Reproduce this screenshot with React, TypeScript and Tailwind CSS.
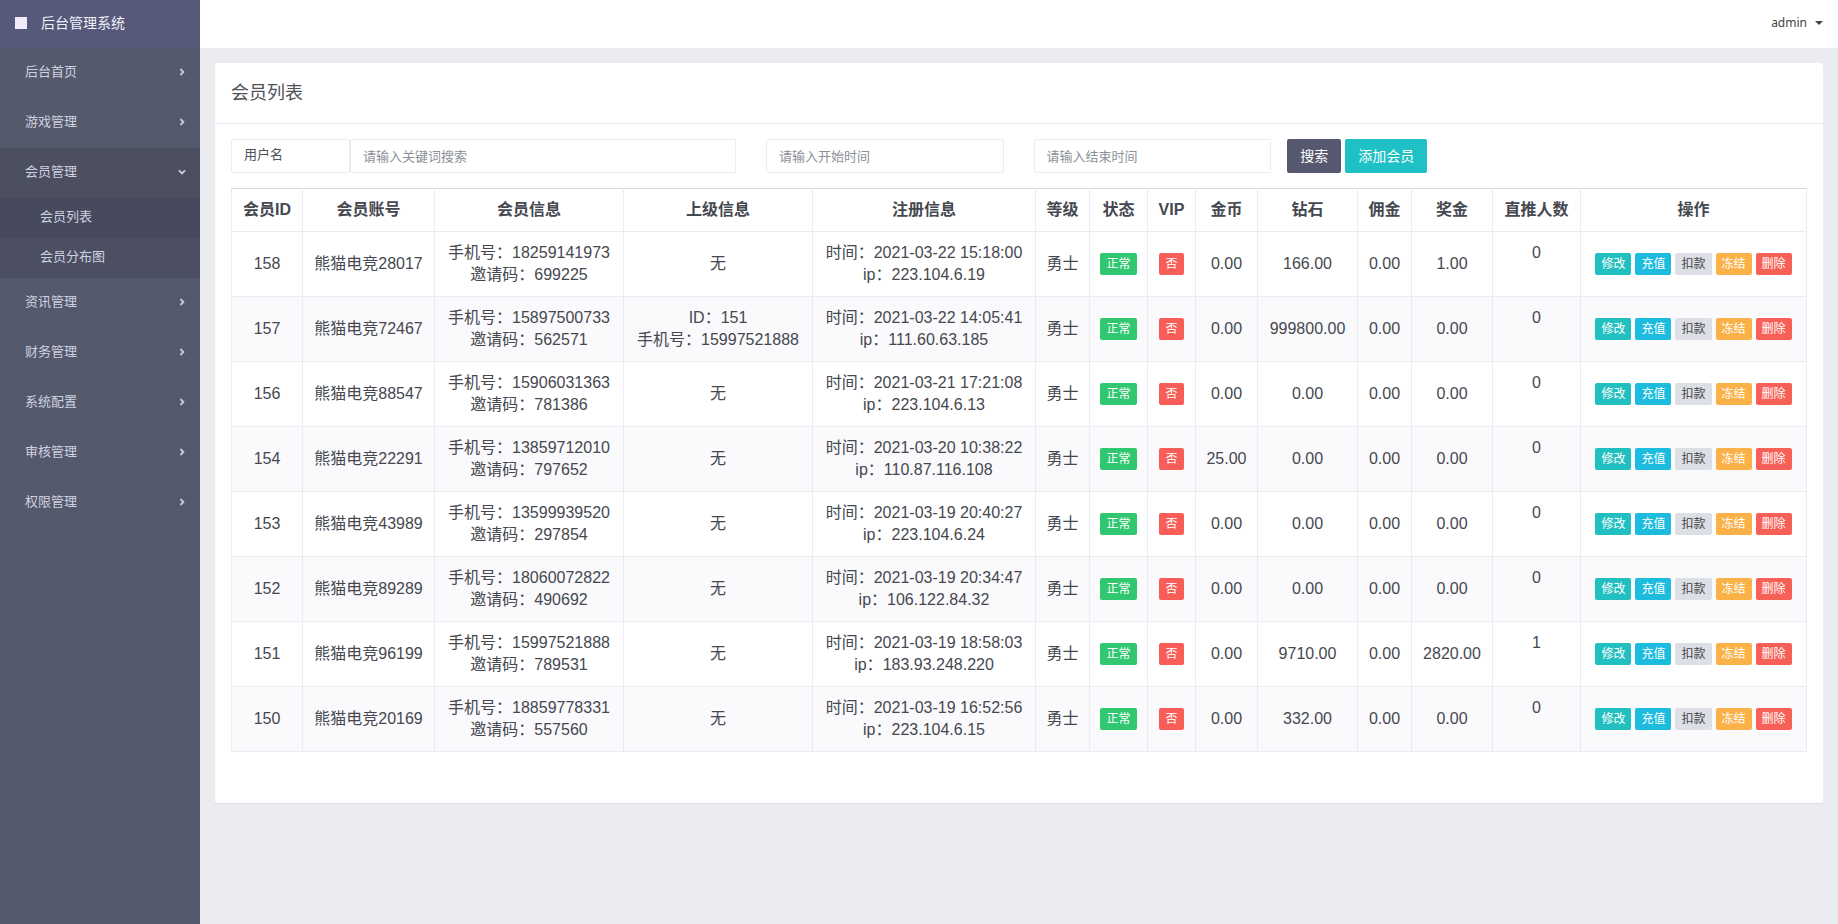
import { useState } from "react";
import clsx from "clsx";

// ── Types ──────────────────────────────────────────────────

interface MenuGroup {
  label: string;
  children?: string[];
}

interface Member {
  id: number;
  account: string;
  phone: string;
  code: string;
  parent?: { id: number; phone: string };
  time: string;
  ip: string;
  gold: string;
  diamond: string;
  commission: string;
  bonus: string;
  referrals: number;
}

// ── Constants ────────────────────────────────────────────

const MENU: MenuGroup[] = [
  { label: "后台首页" },
  { label: "游戏管理" },
  { label: "会员管理", children: ["会员列表", "会员分布图"] },
  { label: "资讯管理" },
  { label: "财务管理" },
  { label: "系统配置" },
  { label: "审核管理" },
  { label: "权限管理" },
];

const COLUMNS = [
  { title: "会员ID", width: "w-[71px]" },
  { title: "会员账号", width: "w-[132px]" },
  { title: "会员信息", width: "w-[189px]" },
  { title: "上级信息", width: "w-[189px]" },
  { title: "注册信息", width: "w-[223px]" },
  { title: "等级", width: "w-[54px]" },
  { title: "状态", width: "w-[58px]" },
  { title: "VIP", width: "w-[48px]" },
  { title: "金币", width: "w-[62px]" },
  { title: "钻石", width: "w-[100px]" },
  { title: "佣金", width: "w-[54px]" },
  { title: "奖金", width: "w-[81px]" },
  { title: "直推人数", width: "w-[88px]" },
  { title: "操作", width: "w-[226px]" },
];

const ACTIONS = [
  { label: "修改", style: "bg-[#22bfc0] text-white" },
  { label: "充值", style: "bg-[#1dbbdd] text-white" },
  { label: "扣款", style: "bg-[#dddfe7] text-[#444]" },
  { label: "冻结", style: "bg-[#fab147] text-white" },
  { label: "删除", style: "bg-[#f76056] text-white" },
];

const MEMBERS: Member[] = [
  { id: 158, account: "熊猫电竞28017", phone: "18259141973", code: "699225", time: "2021-03-22 15:18:00", ip: "223.104.6.19", gold: "0.00", diamond: "166.00", commission: "0.00", bonus: "1.00", referrals: 0 },
  { id: 157, account: "熊猫电竞72467", phone: "15897500733", code: "562571", parent: { id: 151, phone: "15997521888" }, time: "2021-03-22 14:05:41", ip: "111.60.63.185", gold: "0.00", diamond: "999800.00", commission: "0.00", bonus: "0.00", referrals: 0 },
  { id: 156, account: "熊猫电竞88547", phone: "15906031363", code: "781386", time: "2021-03-21 17:21:08", ip: "223.104.6.13", gold: "0.00", diamond: "0.00", commission: "0.00", bonus: "0.00", referrals: 0 },
  { id: 154, account: "熊猫电竞22291", phone: "13859712010", code: "797652", time: "2021-03-20 10:38:22", ip: "110.87.116.108", gold: "25.00", diamond: "0.00", commission: "0.00", bonus: "0.00", referrals: 0 },
  { id: 153, account: "熊猫电竞43989", phone: "13599939520", code: "297854", time: "2021-03-19 20:40:27", ip: "223.104.6.24", gold: "0.00", diamond: "0.00", commission: "0.00", bonus: "0.00", referrals: 0 },
  { id: 152, account: "熊猫电竞89289", phone: "18060072822", code: "490692", time: "2021-03-19 20:34:47", ip: "106.122.84.32", gold: "0.00", diamond: "0.00", commission: "0.00", bonus: "0.00", referrals: 0 },
  { id: 151, account: "熊猫电竞96199", phone: "15997521888", code: "789531", time: "2021-03-19 18:58:03", ip: "183.93.248.220", gold: "0.00", diamond: "9710.00", commission: "0.00", bonus: "2820.00", referrals: 1 },
  { id: 150, account: "熊猫电竞20169", phone: "18859778331", code: "557560", time: "2021-03-19 16:52:56", ip: "223.104.6.15", gold: "0.00", diamond: "332.00", commission: "0.00", bonus: "0.00", referrals: 0 },
];

const FIELD =
  "h-[34px] w-full min-w-0 rounded-xs border border-[#ebebf1] bg-white px-3 text-[13px] text-[#4d5259] outline-none placeholder:text-[#8b8f98] focus:border-[#22bfc0]";

// ── Sidebar ──────────────────────────────────────────────

function Chevron({ open }: { open: boolean }) {
  return (
    <svg
      viewBox="0 0 10 10"
      className={clsx("h-2.5 w-2.5", open && "rotate-90")}
      fill="none"
      stroke="#c9cbda"
      strokeWidth="1.8"
      aria-hidden="true"
    >
      <path d="M3.4 2 6.4 5 3.4 8" />
    </svg>
  );
}

function Sidebar() {
  const [openGroup, setOpenGroup] = useState("会员管理");

  return (
    <aside className="w-[200px] shrink-0 bg-[#54596b] text-[#cfd1e0]">
      <a href="#" className="flex h-12 items-center gap-3.5 bg-[#565979] px-[15px] pb-0.5 text-sm text-[#f0f0fa]">
        <span className="h-3 w-3 bg-[#f0ecfa]" aria-hidden="true" />
        <span>后台管理系统</span>
      </a>
      <nav>
        {MENU.map((group) => {
          const open = group.label === openGroup;
          return (
            <div key={group.label}>
              <button
                type="button"
                aria-expanded={open}
                onClick={() => setOpenGroup(open ? "" : group.label)}
                className={clsx(
                  "flex h-[50px] w-full items-center justify-between pr-[13px] pb-0.5 pl-[25px] text-[13px]",
                  open && "bg-[#4b4f60]",
                )}
              >
                {group.label}
                <Chevron open={open} />
              </button>
              {open &&
                group.children?.map((child, i) => (
                  <a
                    key={child}
                    href="#"
                    className={clsx(
                      "flex h-10 items-center pb-0.5 pl-10 text-[13px]",
                      i === 0 ? "bg-[#464a5c]" : "bg-[#4b4f61]",
                    )}
                  >
                    {child}
                  </a>
                ))}
            </div>
          );
        })}
      </nav>
    </aside>
  );
}

// ── Filters ──────────────────────────────────────────────

function Filters() {
  return (
    <form className="flex gap-4" onSubmit={(e) => e.preventDefault()}>
      <div className="grid w-[66%] grid-cols-8 gap-x-[30px]">
        <div className="col-span-4 flex">
          <div className="w-[119px] shrink-0">
            <select aria-label="搜索字段" className={clsx(FIELD, "appearance-none pb-0.5")}>
              <option>用户名</option>
            </select>
          </div>
          <input aria-label="关键词" placeholder="请输入关键词搜索" className={FIELD} />
        </div>
        <div className="col-span-2">
          <input aria-label="开始时间" placeholder="请输入开始时间" className={FIELD} />
        </div>
        <div className="col-span-2">
          <input aria-label="结束时间" placeholder="请输入结束时间" className={FIELD} />
        </div>
      </div>
      <div className="flex gap-1">
        <button type="submit" className="h-[34px] rounded-xs bg-[#55586e] px-[13px] text-sm text-white">
          搜索
        </button>
        <button type="button" className="h-[34px] rounded-xs bg-[#20c1c6] px-[13px] text-sm text-white">
          添加会员
        </button>
      </div>
    </form>
  );
}

// ── Table ────────────────────────────────────────────────

function MemberTable() {
  return (
    <table className="w-full border-collapse border border-t-[#d3d5dd] border-[#ebebf1] text-center text-base leading-[22px] whitespace-nowrap text-[#45484f] [&_td]:border [&_td]:border-[#ebebf1] [&_td]:py-2.5 [&_th]:border [&_th]:border-[#ebebf1] [&_th]:border-t-[#d3d5dd] [&_th]:py-2.5">
      <colgroup>
        {COLUMNS.map((col) => (
          <col key={col.title} className={col.width} />
        ))}
      </colgroup>
      <thead>
        <tr>
          {COLUMNS.map((col) => (
            <th key={col.title} scope="col" className="font-bold">
              {col.title}
            </th>
          ))}
        </tr>
      </thead>
      <tbody>
        {MEMBERS.map((m) => (
          <tr key={m.id} className="even:bg-[#faf9fc]">
            <td>{m.id}</td>
            <td>{m.account}</td>
            <td>
              手机号：{m.phone}
              <br />
              邀请码：{m.code}
            </td>
            <td>
              {m.parent ? (
                <>
                  ID：{m.parent.id}
                  <br />
                  手机号：{m.parent.phone}
                </>
              ) : (
                "无"
              )}
            </td>
            <td>
              时间：{m.time}
              <br />
              ip：{m.ip}
            </td>
            <td>勇士</td>
            <td>
              <span className="inline-block rounded-xs bg-[#30c770] px-1.5 align-middle text-xs leading-[22px] text-white">
                正常
              </span>
            </td>
            <td>
              <span className="inline-block rounded-xs bg-[#f85e57] px-1.5 align-middle text-xs leading-[22px] text-white">
                否
              </span>
            </td>
            <td>{m.gold}</td>
            <td>{m.diamond}</td>
            <td>{m.commission}</td>
            <td>{m.bonus}</td>
            <td className="align-top">{m.referrals}</td>
            <td>
              <div className="flex justify-center gap-1">
                {ACTIONS.map((action) => (
                  <button
                    key={action.label}
                    type="button"
                    className={clsx("rounded-xs px-1.5 text-xs leading-[22px]", action.style)}
                  >
                    {action.label}
                  </button>
                ))}
              </div>
            </td>
          </tr>
        ))}
      </tbody>
    </table>
  );
}

// ── Page ─────────────────────────────────────────────────

export default function App() {
  return (
    <div className="flex min-h-screen bg-[#eaecef] font-['Liberation_Sans','Noto_Sans_CJK_SC',sans-serif]">
      <Sidebar />
      <div className="min-w-0 flex-1">
        <header className="flex h-12 items-center justify-end bg-white px-[15px]">
          <button
            type="button"
            className="flex items-center gap-2 pb-0.5 font-['Noto_Sans','Noto_Sans_CJK_SC',sans-serif] text-xs text-[#444]"
          >
            admin
            <svg viewBox="0 0 8 4" className="h-1 w-2" fill="currentColor" aria-hidden="true">
              <path d="M0 0h8L4 4z" />
            </svg>
          </button>
        </header>
        <main className="p-[15px]">
          <section className="rounded-xs bg-white shadow-2xs">
            <div className="flex h-[61px] items-center border-b border-[#ebebf1] px-4">
              <h1 className="text-lg text-[#4d5259]">会员列表</h1>
            </div>
            <div className="px-4 pt-[15px] pb-[51px]">
              <Filters />
              <div className="mt-[15px]">
                <MemberTable />
              </div>
            </div>
          </section>
        </main>
      </div>
    </div>
  );
}
